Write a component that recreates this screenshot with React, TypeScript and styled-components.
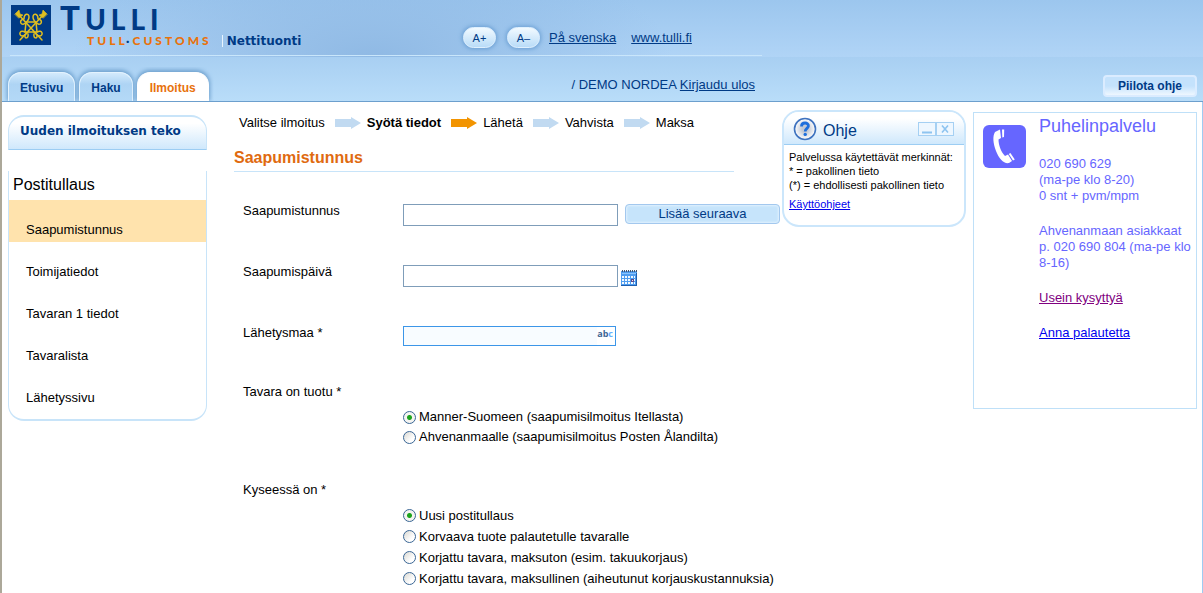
import React from 'react';
import styled, { createGlobalStyle } from 'styled-components';

const navy = '#003a85';
const paleLine = '#c8e4f9';

const GlobalStyle = createGlobalStyle`
  * { box-sizing: border-box; }
  html, body { margin: 0; background: #fff; }
  body, button, input {
    font-family: 'Liberation Sans', Arial, sans-serif;
    font-size: 13px;
    line-height: 16px;
    color: #000;
  }
  button { padding: 0; cursor: pointer; }
  p, h1, h2, ul, ol { margin: 0; padding: 0; font-weight: normal; }
  ul, ol { list-style: none; }
`;

const Page = styled.div`
  min-height: 100vh;
  border-left: 2px solid #716f64;
  border-image: linear-gradient(to right, #aca899 50%, #716f64 50%) 1;
  border-image-width: 0 0 0 2px;
  box-shadow: inset -1px 0 #9fcbf2;
`;

const Banner = styled.header`
  height: 57px;
  display: flex;
  background:
    radial-gradient(ellipse 300px 110px at 370px 57px, #8fb9e4 0%, rgba(143, 185, 228, 0) 100%),
    linear-gradient(#9cc6ee, #b0d4f6);
`;

const BannerInner = styled.div`
  width: 752px;
  height: 56px;
  margin-left: 8px;
  display: flex;
  border-bottom: 1px solid #c9e6fb;
`;

const Brand = styled.div`
  flex: 0 0 453px;
  display: flex;
  align-items: flex-start;
  padding: 3px 0 0 1px;
  svg { margin-top: 2px; }
`;

const Wordmark = styled.div`
  margin-left: 9px;
  color: ${navy};
  font-family: Lato, sans-serif;
  font-weight: 900;
`;

const WordTop = styled.div`
  font-size: 28px;
  line-height: 28px;
  letter-spacing: 5px;
  &::first-letter { font-size: 33px; }
`;

const WordBottom = styled.div`
  margin-top: 1px;
  padding-left: 27px;
  font-size: 12px;
  font-weight: 900;
  line-height: 14px;
  letter-spacing: 3px;
  color: #e8720c;
  b { color: ${navy}; }
`;

const ServiceName = styled.span`
  align-self: flex-end;
  margin: 0 0 8px 10px;
  padding-left: 4px;
  border-left: 1px solid #e8f4fe;
  color: ${navy};
  font: bold 12px/12px 'DejaVu Sans', Verdana, sans-serif;
`;

const Tools = styled.div`
  display: flex;
  align-items: center;
  padding-top: 20px;
  gap: 11px;
`;

const SizeButton = styled.button`
  width: 33px;
  height: 21px;
  border: 1px solid #dff0fe;
  border-radius: 11px;
  background: linear-gradient(#f2faff, #b9dcf8);
  box-shadow: 0 0 4px 1px #6a9fd3;
  color: ${navy};
  font-size: 11px;
  line-height: 14px;
`;

const HeaderLinks = styled.nav`
  display: flex;
  gap: 15px;
  margin-left: -2px;
`;

const HeaderLink = styled.a`
  color: ${navy};
`;

const NavBar = styled.div`
  height: 45px;
  display: flex;
  align-items: flex-end;
  justify-content: space-between;
  padding: 0 6px;
  border-bottom: 1px solid #6c9fcd;
  background: linear-gradient(#a8cff2, #b9ddf9);
`;

const NavLeft = styled.div`
  flex: 0 0 747px;
  display: flex;
  align-items: flex-end;
  justify-content: space-between;
`;

const Tabs = styled.nav`
  display: flex;
  gap: 4px;
`;

const Tab = styled.a<{ $active?: boolean }>`
  height: 29px;
  margin-bottom: ${p => (p.$active ? '-1px' : '0')};
  padding: ${p => (p.$active ? '7px 12px 0' : '7px 11px 0')};
  border: 1px solid ${p => (p.$active ? '#fff' : '#e4f3fe')};
  border-bottom: 0;
  border-radius: 13px 13px 0 0;
  background: ${p => (p.$active ? '#fff' : 'linear-gradient(#d3eafc, #aed4f4 40%, #b4d9f7)')};
  box-shadow: 0 -1px 4px 1px #6c9fcd;
  clip-path: inset(-5px -5px 0 -5px);
  color: ${p => (p.$active ? '#e8720c' : navy)};
  font-size: 12px;
  font-weight: bold;
  text-decoration: none;
`;

const UserInfo = styled.span`
  margin-bottom: 8px;
  color: ${navy};
`;

const HideHelp = styled.button`
  width: 94px;
  height: 22px;
  margin-bottom: 4px;
  border: 2px solid #dbecff;
  border-radius: 4px;
  background: linear-gradient(#c4e2fc 50%, #eef7ff);
  color: ${navy};
  font-size: 12px;
  font-weight: bold;
`;

const Body = styled.div`
  display: flex;
  align-items: flex-start;
  padding: 0 6px;
`;

const Sidebar = styled.aside`
  flex: 0 0 199px;
  padding-top: 13px;
`;

const SideTitle = styled.h2`
  height: 35px;
  padding: 5px 11px;
  border: 1px solid ${paleLine};
  border-top-width: 2px;
  border-bottom-color: #9ccdf3;
  border-radius: 16px 16px 0 0;
  background: linear-gradient(#fff 20%, #cfe8fc);
  color: ${navy};
  font: bold 12px/18px 'DejaVu Sans', Verdana, sans-serif;
`;

const SideBox = styled.nav`
  margin-top: 21px;
  padding-bottom: 9px;
  border: 1px solid ${paleLine};
  border-top: 0;
  border-bottom-width: 2px;
  border-radius: 0 0 16px 16px;
`;

const SideGroup = styled.h2`
  height: 29px;
  padding: 5px 4px;
  font-size: 16px;
  line-height: 18px;
`;

const SideLink = styled.a<{ $active?: boolean }>`
  display: block;
  height: 42px;
  padding: 22px 17px 4px;
  background: ${p => (p.$active ? '#ffe3ad' : 'transparent')};
  color: #000;
  text-decoration: none;
`;

const Main = styled.main`
  flex: 1;
  min-width: 0;
  padding: 13px 0 0 27px;
`;

const Steps = styled.ol`
  display: flex;
  padding-left: 5px;
`;

const Step = styled.li<{ $current?: boolean }>`
  display: flex;
  align-items: center;
  white-space: nowrap;
  font-weight: ${p => (p.$current ? 'bold' : 'normal')};
  svg { margin: 0 6px 0 10px; }
`;

const Title = styled.h1`
  width: 500px;
  max-width: 100%;
  margin-top: 17px;
  padding-bottom: 3px;
  border-bottom: 1px solid ${paleLine};
  color: #e06a10;
  font-size: 16px;
  font-weight: bold;
  line-height: 20px;
`;

const Form = styled.form`
  padding: 31px 0 0 9px;
`;

const Row = styled.div`
  display: flex;
  align-items: flex-start;
  margin-bottom: 38px;
`;

const Label = styled.label`
  flex: 0 0 160px;
`;

const TextInput = styled.input`
  width: 215px;
  height: 22px;
  margin-top: 1px;
  padding: 2px 4px;
  border: 1px solid #7f9db9;
  background: #fff;
`;

const AddButton = styled.button`
  width: 155px;
  height: 20px;
  margin: 1px 0 0 7px;
  border: 1px solid #a3c8ee;
  border-radius: 4px;
  background: #c6e4fb;
  box-shadow: inset 0 0 2px 1px #e0f1fe;
  color: ${navy};
`;

const CalendarButton = styled.button`
  width: 16px;
  height: 16px;
  margin: 6px 0 0 3px;
  border: 0;
  background: none;
  svg { display: block; }
`;

const Combo = styled.div`
  display: flex;
  width: 213px;
  height: 20px;
  margin-top: 1px;
  border: 1px solid #3c96e8;
  background: #f8fcff;
`;

const ComboInput = styled.input`
  flex: 1;
  min-width: 0;
  padding: 0 4px;
  border: 0;
  background: none;
`;

const ComboHint = styled.span`
  padding-right: 2px;
  background: #fff;
  color: #3f6693;
  font: bold 9px/13px 'Open Sans', sans-serif;
  i { font-style: normal; color: #66b0ff; }
`;

const Choices = styled.fieldset`
  min-width: 0;
  margin: 0 0 35px;
  padding: 0;
  border: 0;
  &:last-child { margin-bottom: 0; }
`;

const Legend = styled.legend`
  margin-bottom: 7px;
  padding: 0;
`;

const Choice = styled.label<{ $tall?: boolean }>`
  display: flex;
  align-items: center;
  gap: 3px;
  height: ${p => (p.$tall ? '21px' : '20px')};
  padding-left: 160px;
  white-space: nowrap;
`;

const Radio = styled.input`
  appearance: none;
  flex: none;
  width: 13px;
  height: 13px;
  margin: 0;
  border: 1px solid #3a6695;
  border-radius: 50%;
  background: linear-gradient(135deg, #d9d8d2, #fff 70%);
  &:checked {
    background: radial-gradient(circle, #1ca31c 2px, rgba(28, 163, 28, 0) 3px), #f4f4f1;
  }
`;

const Help = styled.aside`
  flex: 0 0 184px;
  height: 117px;
  margin-top: 8px;
  border: 2px solid #cbe6fb;
  border-radius: 17px;
  overflow: hidden;
`;

const HelpHead = styled.div`
  height: 33px;
  display: flex;
  align-items: center;
  padding: 2px 10px 0 9px;
  border-bottom: 1px solid #9ccdf3;
  background: linear-gradient(#fff 20%, #cfe8fc);
`;

const HelpTitle = styled.h2`
  flex: 1;
  padding: 3px 0 0 6px;
  color: ${navy};
  font-size: 16px;
  line-height: 20px;
`;

const WindowButton = styled.button`
  width: 18px;
  height: 14px;
  display: grid;
  place-items: center;
  border: 1px solid #a5d0f3;
  background: #eef7ff;
`;

const HelpText = styled.div`
  padding: 5px 0 0 5px;
  font-size: 11px;
  line-height: 14px;
  white-space: nowrap;
`;

const HelpLink = styled.a`
  display: inline-block;
  margin-top: 5px;
  color: #0000ee;
`;

const Phone = styled.aside`
  flex: 0 0 224px;
  display: flex;
  align-items: flex-start;
  min-height: 297px;
  margin: 10px 0 0 7px;
  padding: 3px 0 0 9px;
  border: 1px solid #bfe0f8;
  svg { flex: none; margin-top: 9px; }
`;

const PhoneText = styled.div`
  flex: 1;
  display: flex;
  flex-direction: column;
  gap: 19px;
  padding-left: 13px;
  color: #6666ff;
`;

const PhoneTitle = styled.h2`
  padding-bottom: 1px;
  font-size: 18px;
  line-height: 20px;
`;

const PhoneLink = styled.a<{ $visited?: boolean }>`
  color: ${p => (p.$visited ? '#800080' : '#0000ee')};
`;

const Emblem = () => (
  <svg width="40" height="40" viewBox="0 0 40 40" aria-hidden="true">
    <rect width="40" height="40" fill="#003a85" />
    <g fill="none" stroke="#e0bf20" strokeWidth="1.5" strokeLinecap="round" strokeLinejoin="round">
      <path d="M7 9 L31 35 M33 9 L9 35" />
      <path d="M4 9 L8 5 L9 9 L12 10 L8 13 Z M36 9 L32 5 L31 9 L28 10 L32 13 Z" fill="#e0bf20" strokeWidth="0.6" />
      <path d="M13 14 C13 8 18 8 18 12 C18 15 16 17 13 19 C9 20 8 15 13 14 M27 14 C27 8 22 8 22 12 C22 15 24 17 27 19 C31 20 32 15 27 14" />
      <path d="M15 17 H25 M15 17 L14 27 H26 L25 17" />
      <path d="M14 27 C9 24 7 30 11 31 C14 31 15 29 17 27 M26 27 C31 24 33 30 29 31 C26 31 25 29 23 27" />
      <path d="M14 30 C13 34 18 34 17 29 M26 30 C27 34 22 34 23 29" />
    </g>
  </svg>
);

const Arrow = ({ color }: { color: string }) => (
  <svg width="26" height="12" viewBox="0 0 26 12" aria-hidden="true">
    <path d="M0 2 H16 V0 L26 6 L16 12 V10 H0 Z" fill={color} />
  </svg>
);

const CalendarIcon = () => (
  <svg width="16" height="16" viewBox="0 0 16 16" shapeRendering="crispEdges" aria-hidden="true">
    <rect y="1" width="16" height="15" fill="#4f9df0" />
    <path d="M1 1 H16" stroke="#44566e" strokeWidth="2" strokeDasharray="1 1" />
    <rect x="1" y="3" width="14" height="1" fill="#8cc4fb" />
    <path d="M1 7 H14 M1 10 H14 M1 13 H14" stroke="#f2f9ff" strokeWidth="2" strokeDasharray="2 1" />
    <rect x="10" y="9" width="2" height="2" fill="#f2e8f8" stroke="#5a4a8c" />
    <path d="M0 15.5 H16 M15.5 3 V16" stroke="#1f5fae" />
  </svg>
);

const HelpIcon = () => (
  <svg width="24" height="24" viewBox="0 0 24 24" aria-hidden="true">
    <defs>
      <radialGradient id="glass">
        <stop offset="0.3" stopColor="#c3c9d4" />
        <stop offset="1" stopColor="#fff" />
      </radialGradient>
    </defs>
    <circle cx="12" cy="12" r="10.5" fill="url(#glass)" stroke="#3f73bf" strokeWidth="1.6" />
    <path d="M8.5 9.5 C8.5 4.8 15.8 5 15.4 9.2 C15.2 11.4 12.2 11.6 12.2 14.4" fill="none" stroke="#1f6fdc" strokeWidth="2.8" />
    <circle cx="12.2" cy="17.4" r="1.7" fill="#1f6fdc" />
  </svg>
);

const PhoneIcon = () => (
  <svg width="43" height="43" viewBox="0 0 43 43" aria-hidden="true">
    <rect width="43" height="43" rx="6" fill="#6666ff" />
    <path d="M12 7 L17 4.5 L18 13 L15.5 14.5 C15.5 20 18 27 22 31 L25 29.5 L29 36 L26 38 C21 39 16 34 13 26 C10 18 9.5 11 12 7 Z" fill="#fff" />
    <path d="M19 4.5 L21.2 4.5 L21 12 L19.3 12.5 Z M25.8 29 L27.4 28 L31.8 34.5 L30 35.6 Z" fill="#fff" />
  </svg>
);

const sections = ['Saapumistunnus', 'Toimijatiedot', 'Tavaran 1 tiedot', 'Tavaralista', 'Lähetyssivu'];
const origins = ['Manner-Suomeen (saapumisilmoitus Itellasta)', 'Ahvenanmaalle (saapumisilmoitus Posten Ålandilta)'];
const kinds = [
  'Uusi postitullaus',
  'Korvaava tuote palautetulle tavaralle',
  'Korjattu tavara, maksuton (esim. takuukorjaus)',
  'Korjattu tavara, maksullinen (aiheutunut korjauskustannuksia)',
];
const steps = ['Valitse ilmoitus', 'Syötä tiedot', 'Lähetä', 'Vahvista', 'Maksa'];
const currentStep = 1;

export default function App() {
  return (
    <Page>
      <GlobalStyle />
      <Banner>
        <BannerInner>
          <Brand>
            <Emblem />
            <Wordmark>
              <WordTop>TULLI</WordTop>
              <WordBottom>TULL<b>·</b>CUSTOMS</WordBottom>
            </Wordmark>
            <ServiceName>Nettituonti</ServiceName>
          </Brand>
          <Tools>
            <SizeButton type="button">A+</SizeButton>
            <SizeButton type="button">A–</SizeButton>
            <HeaderLinks>
              <HeaderLink href="#sv">På svenska</HeaderLink>
              <HeaderLink href="#tulli">www.tulli.fi</HeaderLink>
            </HeaderLinks>
          </Tools>
        </BannerInner>
      </Banner>
      <NavBar>
        <NavLeft>
          <Tabs>
            <Tab href="#etusivu">Etusivu</Tab>
            <Tab href="#haku">Haku</Tab>
            <Tab href="#ilmoitus" $active>Ilmoitus</Tab>
          </Tabs>
          <UserInfo>/ DEMO NORDEA <HeaderLink href="#ulos">Kirjaudu ulos</HeaderLink></UserInfo>
        </NavLeft>
        <HideHelp type="button">Piilota ohje</HideHelp>
      </NavBar>
      <Body>
        <Sidebar>
          <SideTitle>Uuden ilmoituksen teko</SideTitle>
          <SideBox>
            <SideGroup>Postitullaus</SideGroup>
            <ul>
              {sections.map((s, i) => (
                <li key={s}><SideLink href={`#osa-${i}`} $active={i === 0}>{s}</SideLink></li>
              ))}
            </ul>
          </SideBox>
        </Sidebar>
        <Main>
          <Steps>
            {steps.map((s, i) => (
              <Step key={s} $current={i === currentStep}>
                {s}
                {i < steps.length - 1 && <Arrow color={i === currentStep ? '#f29400' : '#c1daf1'} />}
              </Step>
            ))}
          </Steps>
          <Title>Saapumistunnus</Title>
          <Form>
            <Row>
              <Label htmlFor="tunnus">Saapumistunnus</Label>
              <TextInput id="tunnus" type="text" />
              <AddButton type="button">Lisää seuraava</AddButton>
            </Row>
            <Row>
              <Label htmlFor="paiva">Saapumispäivä</Label>
              <TextInput id="paiva" type="text" />
              <CalendarButton type="button" aria-label="Kalenteri"><CalendarIcon /></CalendarButton>
            </Row>
            <Row>
              <Label htmlFor="maa">Lähetysmaa *</Label>
              <Combo>
                <ComboInput id="maa" type="text" />
                <ComboHint>ab<i>c</i></ComboHint>
              </Combo>
            </Row>
            <Choices>
              <Legend>Tavara on tuotu *</Legend>
              {origins.map((o, i) => (
                <Choice key={o}>
                  <Radio type="radio" name="origin" defaultChecked={i === 0} />
                  {o}
                </Choice>
              ))}
            </Choices>
            <Choices>
              <Legend>Kyseessä on *</Legend>
              {kinds.map((k, i) => (
                <Choice key={k} $tall>
                  <Radio type="radio" name="kind" defaultChecked={i === 0} />
                  {k}
                </Choice>
              ))}
            </Choices>
          </Form>
        </Main>
        <Help>
          <HelpHead>
            <HelpIcon />
            <HelpTitle>Ohje</HelpTitle>
            <WindowButton type="button" aria-label="Pienennä">
              <svg width="12" height="10" viewBox="0 0 12 10"><path d="M1 8.5 H11" stroke="#8ec4f0" strokeWidth="2" /></svg>
            </WindowButton>
            <WindowButton type="button" aria-label="Sulje">
              <svg width="8" height="8" viewBox="0 0 8 8"><path d="M1 0.5 L7 7.5 M7 0.5 L1 7.5" stroke="#8ec4f0" strokeWidth="1.6" /></svg>
            </WindowButton>
          </HelpHead>
          <HelpText>
            <p>Palvelussa käytettävät merkinnät:</p>
            <p>* = pakollinen tieto</p>
            <p>(*) = ehdollisesti pakollinen tieto</p>
            <HelpLink href="#kayttoohjeet">Käyttöohjeet</HelpLink>
          </HelpText>
        </Help>
        <Phone>
          <PhoneIcon />
          <PhoneText>
            <PhoneTitle>Puhelinpalvelu</PhoneTitle>
            <p>020 690 629<br />(ma-pe klo 8-20)<br />0 snt + pvm/mpm</p>
            <p>Ahvenanmaan asiakkaat<br />p. 020 690 804 (ma-pe klo 8-16)</p>
            <PhoneLink href="#ukk" $visited>Usein kysyttyä</PhoneLink>
            <PhoneLink href="#palaute">Anna palautetta</PhoneLink>
          </PhoneText>
        </Phone>
      </Body>
    </Page>
  );
}
